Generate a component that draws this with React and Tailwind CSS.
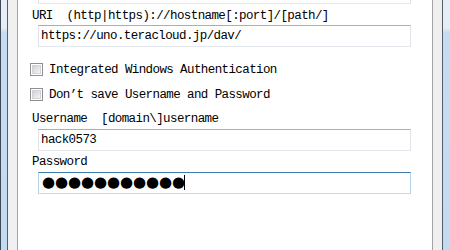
const mono = "font-['Liberation_Mono',monospace] text-[12.5px] tracking-[-0.6px] text-black";

function Frame({ side }) {
  const light = (
    <div className="w-[6px] bg-[linear-gradient(to_bottom,#e6edf4_0px,#e6edf4_28px,#c5dcf3_33px,#c3daf2_100%)]" />
  );
  return (
    <div className="flex h-full shrink-0">
      {side === 'left' ? (
        <>
          <div className="w-px bg-[#3e4a58]" />
          {light}
          <div className="w-px bg-[#555d66]" />
          <div className="w-[9px] bg-[#f0f0f0]" />
          <div className="w-px bg-[#a3a3a3]" />
        </>
      ) : (
        <>
          <div className="w-px bg-[#a3a3a3]" />
          <div className="w-[9px] bg-[#f0f0f0]" />
          <div className="w-px bg-[#555d66]" />
          <div className="w-[7px] bg-[linear-gradient(to_bottom,#e6edf4_0px,#e6edf4_28px,#c5dcf3_33px,#c3daf2_100%)]" />
        </>
      )}
    </div>
  );
}

function TextBox({ value, focused }) {
  return (
    <div
      className={
        'ml-[20px] mr-[21px] h-[22px] border pl-[2px] ' +
        (focused
          ? 'border-[#b2d1ea] border-t-[#3d7bad] border-b-[#c2daee]'
          : 'border-[#e2e3ea] border-t-[#abadb3] border-b-[#e3e9ef]')
      }
    >
      <div className={mono + ' leading-[20px] whitespace-pre'}>{value}</div>
    </div>
  );
}

function Check({ label, className }) {
  return (
    <div className={'ml-[12px] flex h-[13px] items-center gap-[6px] ' + className}>
      <div className="h-[13px] w-[13px] shrink-0 border border-[#8f8f8f] bg-white p-px">
        <div className="h-full w-full border border-[#d0d3d8] bg-[linear-gradient(135deg,#cfd2d6,#f4f4f4)]" />
      </div>
      <span className={mono + ' leading-[18px] whitespace-pre'}>{label}</span>
    </div>
  );
}

function Label({ text, className }) {
  return (
    <div className={'pl-[14px] h-[21px] pt-[2px] ' + className}>
      <div className={mono + ' leading-[18px] whitespace-pre'}>{text}</div>
    </div>
  );
}

export default function App() {
  const dots = Array.from({ length: 11 });
  return (
    <div className="flex h-[250px] w-[450px] overflow-hidden bg-white">
      <Frame side="left" />
      <div className="flex-1 bg-white">
        <div className="ml-[20px] mr-[21px] h-[4px] border-x border-b border-[#e2e3ea] border-b-[#e3e9ef]" />
        <Label text="URI  (http|https)://hostname[:port]/[path/]" className="pt-[3px]" />
        <TextBox value="https://uno.teracloud.jp/dav/" />
        <Check label="Integrated Windows Authentication" className="mt-[16px]" />
        <Check label="Don’t save Username and Password" className="mt-[12px]" />
        <Label text="Username  [domain\]username" className="mt-[7px]" />
        <TextBox value="hack0573" />
        <Label text="Password" />
        <div className="ml-[20px] mr-[21px] flex h-[22px] items-center border border-[#b2d1ea] border-t-[#3d7bad] border-b-[#c2daee] pl-[3px] pb-[2px]">
          {dots.map((_, i) => (
            <span
              key={i}
              className="inline-block w-[13px] text-center font-['DejaVu_Sans',sans-serif] text-[15px] leading-[16px] text-black"
            >
              ●
            </span>
          ))}
          <span className="ml-[-1px] h-[15px] w-px bg-black" />
        </div>
      </div>
      <Frame side="right" />
    </div>
  );
}
